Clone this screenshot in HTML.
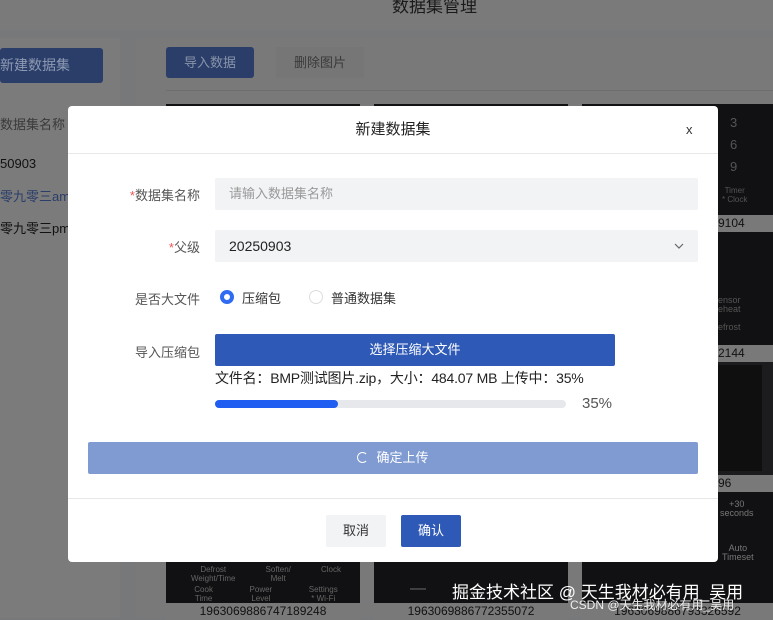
<!DOCTYPE html>
<html><head><meta charset="utf-8"><style>
*{margin:0;padding:0;box-sizing:border-box}
body{width:773px;height:618px;overflow:hidden;position:relative;background:#777879;font-family:"Liberation Sans","Noto Sans CJK SC",sans-serif}
.a{position:absolute}
.tile{position:absolute;background:#111113}
.lbl{position:absolute;background:#797979;color:#111;font-size:12px;text-align:center;height:17px;line-height:17px}
.sm{color:#555;font-size:8px;text-align:center;line-height:9px}
</style></head><body>
<div class="a" style="left:0;top:0;width:773px;height:30px;background:#7a7a7b"></div>
<div class="a" style="left:392px;top:-8px;font-size:17px;color:#1a1a1a">数据集管理</div>
<div class="a" style="left:0;top:38px;width:120px;height:580px;background:#7b7b7c"></div>
<div class="a" style="left:0;top:48px;width:103px;height:35px;background:#2a3e69;border-radius:3px;color:#8e9ab3;font-size:14px;line-height:35px">新建数据集</div>
<div class="a" style="left:0;top:114px;font-size:13px;color:#3a3a3a">数据集名称</div>
<div class="a" style="left:0;top:156px;font-size:13px;color:#111">50903</div>
<div class="a" style="left:0;top:186px;font-size:13px;color:#2a3e69">零九零三am</div>
<div class="a" style="left:0;top:218px;font-size:13px;color:#111">零九零三pm</div>
<div class="a" style="left:136px;top:38px;width:637px;height:580px;background:#797979"></div>
<div class="a" style="left:166px;top:47px;width:88px;height:31px;background:#2a3e69;border-radius:3px;color:#8894aa;font-size:13px;line-height:31px;text-align:center">导入数据</div>
<div class="a" style="left:276px;top:47px;width:88px;height:31px;background:#767676;color:#3a3a3a;font-size:13px;line-height:31px;text-align:center">删除图片</div>
<div class="a" style="left:166px;top:90px;width:607px;height:1px;background:#6e6e6e"></div>
<div class="tile" style="left:166px;top:104px;width:194px;height:499px"></div>
<div class="tile" style="left:374px;top:104px;width:194px;height:499px"></div>
<div class="tile" style="left:582px;top:104px;width:191px;height:111px"></div>
<div class="lbl" style="left:582px;top:215px;width:191px;text-align:left;padding-left:136px">9104</div>
<div class="tile" style="left:582px;top:232px;width:191px;height:113px"></div>
<div class="lbl" style="left:582px;top:345px;width:191px;text-align:left;padding-left:136px">2144</div>
<div class="a" style="left:582px;top:362px;width:191px;height:113px;background:#1c1c1e"></div>
<div class="tile" style="left:718px;top:365px;width:44px;height:106px;background:#0f0f10"></div>
<div class="lbl" style="left:582px;top:475px;width:191px;text-align:left;padding-left:136px">96</div>
<div class="tile" style="left:582px;top:492px;width:191px;height:111px"></div>
<div class="a sm" style="left:730px;top:112px;font-size:13px;color:#555;line-height:22px">3<br>6<br>9</div>
<div class="a sm" style="left:722px;top:186px">Timer<br>* Clock</div>
<div class="a sm" style="left:718px;top:296px;font-size:9px">ensor<br>eheat<br><br>efrost</div>
<div class="a sm" style="left:720px;top:500px;font-size:9px;color:#777">+30<br>seconds</div>
<div class="a sm" style="left:722px;top:544px;font-size:9px;color:#777">Auto<br>Timeset</div>
<div class="a sm" style="left:176px;top:565px;width:180px;display:flex;justify-content:space-around;color:#666">
<span>Defrost<br>Weight/Time</span><span>Soften/<br>Melt</span><span>Clock</span></div>
<div class="a sm" style="left:176px;top:585px;width:180px;display:flex;justify-content:space-around;color:#666">
<span>Cook<br>Time</span><span>Power<br>Level</span><span>Settings<br>* Wi-Fi</span></div>
<div class="lbl" style="left:166px;top:603px;width:194px">1963069886747189248</div>
<div class="lbl" style="left:374px;top:603px;width:194px">1963069886772355072</div>
<div class="lbl" style="left:582px;top:603px;width:191px">1963069886793326592</div>
<div class="a" style="left:410px;top:580px;color:#666;font-size:16px">—</div>
<div class="a" style="left:452px;top:578px;color:#fff;font-size:17px">掘金技术社区 @ 天生我材必有用_吴用</div>
<div class="a" style="left:570px;top:596px;color:#eee;font-size:12px">CSDN @天生我材必有用_吴用</div>
<div class="a" style="left:68px;top:106px;width:650px;height:456px;background:#fff;border-radius:4px">
  <div class="a" style="left:0;top:0;width:650px;height:48px;border-bottom:1px solid #e8e8e8;text-align:center;line-height:48px;font-size:15px;color:#222">新建数据集</div>
  <div class="a" style="left:618px;top:16px;font-size:13px;color:#333">x</div>
  <div class="a" style="left:0;top:79px;width:132px;text-align:right;font-size:13px;color:#555"><span style="color:#e55">*</span>数据集名称</div>
  <div class="a" style="left:147px;top:72px;width:483px;height:32px;background:#f2f3f5;border-radius:2px;font-size:13px;color:#999;line-height:32px;padding-left:14px">请输入数据集名称</div>
  <div class="a" style="left:0;top:131px;width:132px;text-align:right;font-size:13px;color:#555"><span style="color:#e55">*</span>父级</div>
  <div class="a" style="left:147px;top:124px;width:483px;height:32px;background:#f2f3f5;border-radius:2px;font-size:14px;color:#222;line-height:32px;padding-left:14px">20250903</div>
  <svg class="a" style="left:605px;top:135px" width="12" height="10"><path d="M2 3l4 4 4-4" fill="none" stroke="#666" stroke-width="1.2"/></svg>
  <div class="a" style="left:0;top:183px;width:132px;text-align:right;font-size:13px;color:#555">是否大文件</div>
  <div class="a" style="left:152px;top:184px;width:14px;height:14px;border-radius:50%;border:4px solid #2f6cf2"></div>
  <div class="a" style="left:174px;top:182px;font-size:13px;color:#333">压缩包</div>
  <div class="a" style="left:241px;top:184px;width:14px;height:14px;border-radius:50%;border:1px solid #ddd"></div>
  <div class="a" style="left:263px;top:182px;font-size:13px;color:#333">普通数据集</div>
  <div class="a" style="left:0;top:236px;width:132px;text-align:right;font-size:13px;color:#555">导入压缩包</div>
  <div class="a" style="left:147px;top:228px;width:400px;height:32px;background:#2f59b6;border-radius:2px;color:#fff;font-size:13px;line-height:32px;text-align:center">选择压缩大文件</div>
  <div class="a" style="left:147px;top:262px;font-size:14px;color:#222;letter-spacing:-0.2px">文件名：BMP测试图片.zip，大小：484.07 MB 上传中：35%</div>
  <div class="a" style="left:147px;top:294px;width:351px;height:8px;background:#e6e8eb;border-radius:4px"><div style="width:123px;height:8px;background:#1f5ef0;border-radius:4px"></div></div>
  <div class="a" style="left:514px;top:289px;font-size:15px;color:#555">35%</div>
  <div class="a" style="left:20px;top:336px;width:610px;height:32px;background:#7f9bd2;border-radius:2px;color:#fff;font-size:13px;line-height:32px;text-align:center"><span style="display:inline-block;width:11px;height:11px;border:1.5px solid #fff;border-right-color:transparent;border-radius:50%;vertical-align:-1px;margin-right:8px"></span>确定上传</div>
  <div class="a" style="left:0;top:392px;width:650px;height:1px;background:#e8e8e8"></div>
  <div class="a" style="left:258px;top:409px;width:60px;height:32px;background:#f2f3f5;border-radius:2px;font-size:13px;color:#333;line-height:32px;text-align:center">取消</div>
  <div class="a" style="left:333px;top:409px;width:60px;height:32px;background:#2f59b6;border-radius:2px;font-size:13px;color:#fff;line-height:32px;text-align:center">确认</div>
</div>
</body></html>
